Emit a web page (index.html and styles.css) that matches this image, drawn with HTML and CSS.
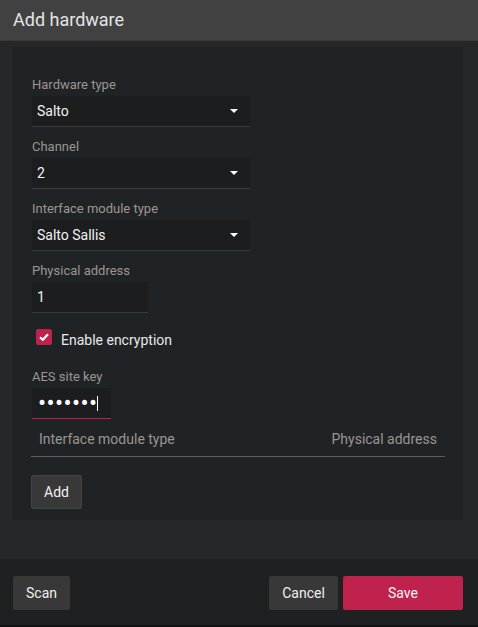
FILE: index.html
```html
<!DOCTYPE html>
<html>
<head>
<meta charset="utf-8">
<link rel="stylesheet" href="styles.css">
</head>
<body>
<div class="dialog">
  <header class="head">Add hardware</header>
  <main class="main">
    <section class="panel">
      <div class="field">
        <label class="label">Hardware type</label>
        <div class="select"><span>Salto</span><i class="caret"></i></div>
      </div>
      <div class="field">
        <label class="label">Channel</label>
        <div class="select"><span>2</span><i class="caret"></i></div>
      </div>
      <div class="field">
        <label class="label">Interface module type</label>
        <div class="select"><span>Salto Sallis</span><i class="caret"></i></div>
      </div>
      <div class="field">
        <label class="label">Physical address</label>
        <div class="input short"><span>1</span></div>
      </div>
      <div class="check">
        <span class="box"><svg width="10" height="8" viewBox="0 0 10 8"><path d="M1 4.2 L3.8 6.8 L9 1.3" fill="none" stroke="#fff" stroke-width="2.2"/></svg></span>
        <span class="check-label">Enable encryption</span>
      </div>
      <div class="field">
        <label class="label">AES site key</label>
        <div class="input key"><span class="dots">•••••••</span><span class="cursor"></span></div>
      </div>
      <div class="table-head">
        <span>Interface module type</span>
        <span>Physical address</span>
      </div>
      <button class="btn add">Add</button>
    </section>
  </main>
  <footer class="foot">
    <button class="btn">Scan</button>
    <div class="right">
      <button class="btn">Cancel</button>
      <button class="btn primary">Save</button>
    </div>
  </footer>
</div>
</body>
</html>
```
FILE: styles.css
```css
* { box-sizing: border-box; }
html, body { margin: 0; padding: 0; }
body {
  width: 478px;
  height: 627px;
  background: #25282b;
  font-family: Roboto, "Liberation Sans", sans-serif;
  overflow: hidden;
}
.dialog {
  display: flex;
  flex-direction: column;
  height: 627px;
}
.head {
  height: 41px;
  background: #414141;
  color: #e4e4e4;
  font-size: 18px;
  line-height: 40px;
  padding-left: 13px;
  border-bottom: 1px solid #393939;
}
.main {
  flex: 1;
  background: #25282b;
  padding: 6px 15px 0 13px;
}
.panel {
  background: #202326;
  height: 473px;
  padding: 30px 18px 0 19px;
}
.field { margin-bottom: 12px; }
.label {
  display: block;
  color: #9c9590;
  font-size: 13px;
  line-height: 15px;
  margin-bottom: 4px;
}
.select, .input {
  height: 31px;
  background: #1c1d1f;
  border-bottom: 1px solid #3a3b3c;
  color: #f2f2f2;
  font-size: 14px;
  display: flex;
  align-items: center;
  padding-left: 5px;
}
.select {
  width: 218px;
  justify-content: space-between;
  padding-right: 12px;
}
.caret {
  width: 0; height: 0;
  border-left: 4px solid transparent;
  border-right: 4px solid transparent;
  border-top: 4px solid #fff;
}
.input.short { width: 116px; }
.input.key {
  width: 79px;
  border-bottom-color: #c0224e;
  padding-left: 6px;
}
.dots {
  font-size: 24px;
  letter-spacing: 0.4px;
  color: #fff;
  line-height: 1;
}
.cursor {
  width: 1px;
  height: 15px;
  background: #fff;
  margin-left: 0;
}
.check {
  display: flex;
  align-items: center;
  margin: 16px 0 24px 4px;
  height: 16px;
}
.box {
  width: 16px; height: 16px;
  background: #c0224e;
  border-radius: 2px;
  display: flex;
  align-items: center;
  justify-content: center;
}
.check-label {
  color: #e8e8e8;
  font-size: 14px;
  margin-left: 9px;
  padding-top: 5px;
}
.table-head {
  display: flex;
  justify-content: space-between;
  margin: 10px 0 0 -1px;
  padding: 0 8px 9px 8px;
  border-bottom: 1px solid #5e5e5e;
  color: #9c9590;
  font-size: 14px;
  line-height: 16px;
}
.btn {
  height: 34px;
  background: #383838;
  border: 1px solid #444;
  border-radius: 2px;
  color: #f0f0f0;
  font-family: Roboto, "Liberation Sans", sans-serif;
  font-size: 14px;
  padding: 0 12px;
  cursor: pointer;
}
.add {
  margin: 18px 0 0 -1px;
  width: 51px;
}
.foot {
  height: 68px;
  background: #1f2022;
  border-bottom: 2px solid #111213;
  display: flex;
  justify-content: space-between;
  align-items: flex-start;
  padding: 17px 15px 0 13px;
}
.foot .btn { border: none; }
.foot .btn:first-child { width: 57px; }
.right { display: flex; gap: 5px; }
.right .btn:first-child { width: 69px; }
.primary {
  width: 120px;
  background: #c0224e;
  color: #f4f4f4;
}
```
